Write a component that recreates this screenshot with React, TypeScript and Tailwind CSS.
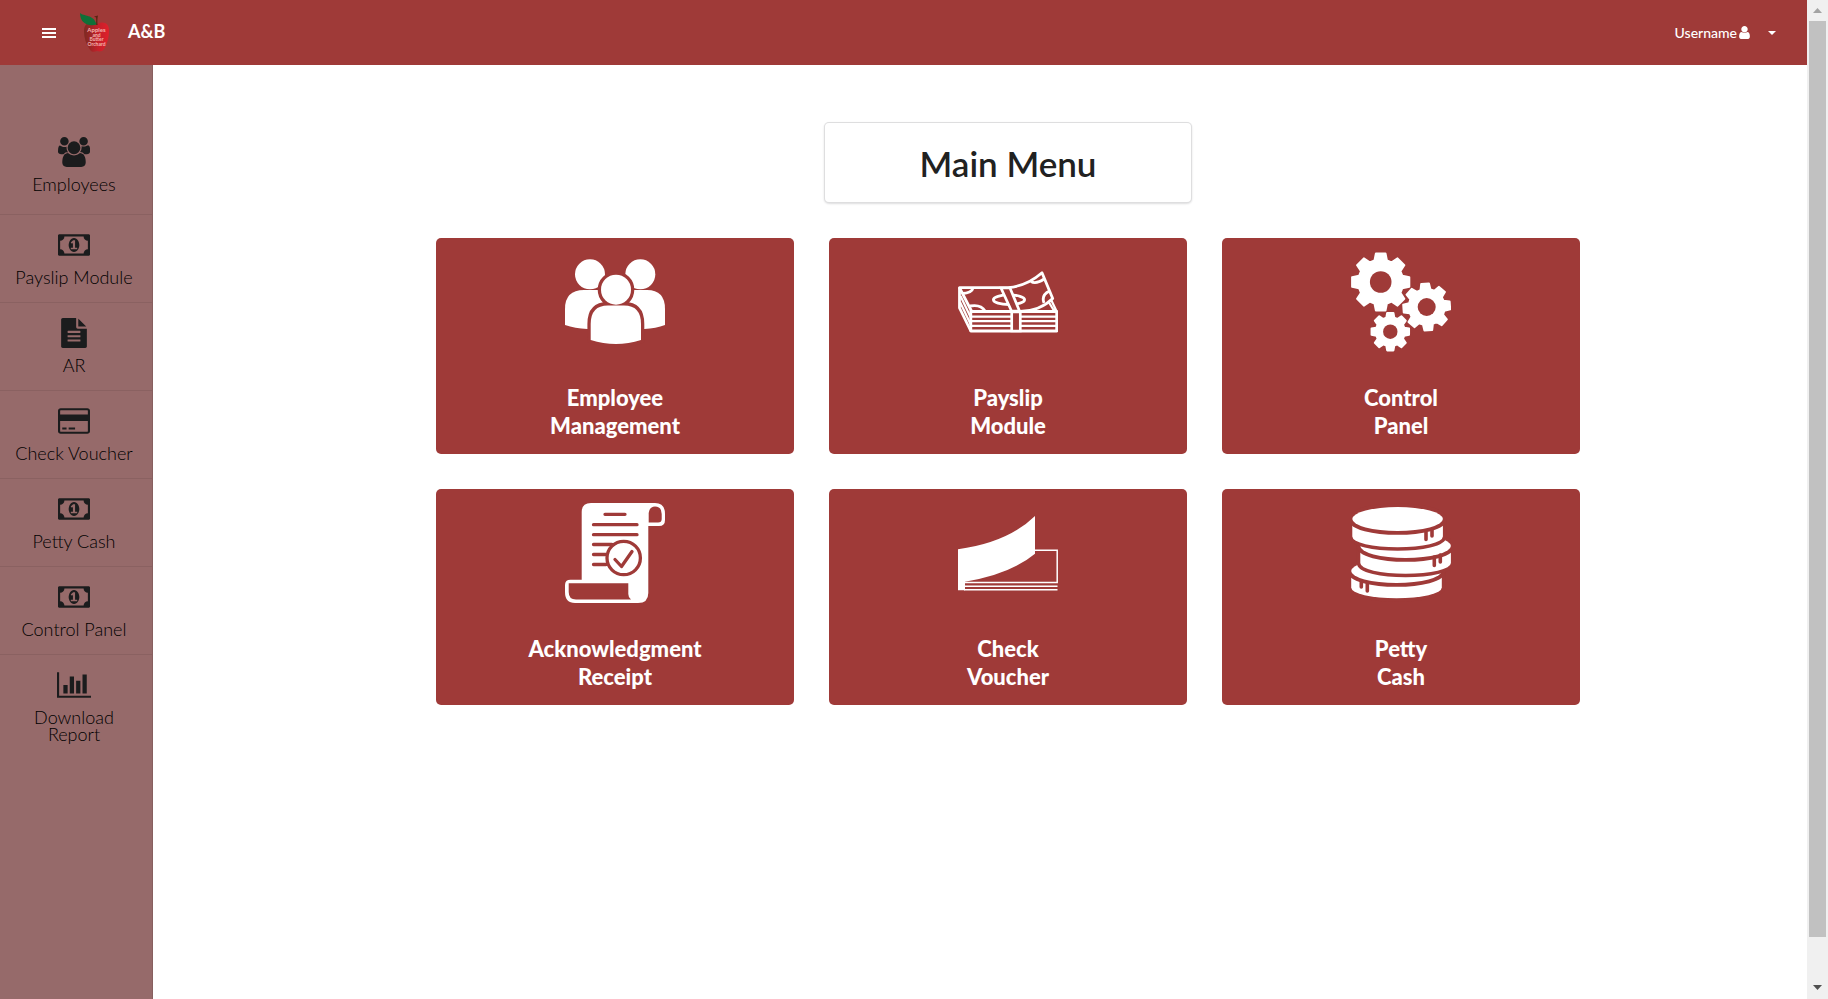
import type { ReactNode } from "react";

const BRAND = "#9f3a38";

type Glyph = { box: string; d: string; size: string };

const glyphs: Record<string, Glyph> = {
  users: {
    box: "0 0 1920 1792",
    size: "h-[30px] w-8",
    d: "M593 896q-162 5-265 128h-134q-82 0-138-40.5t-56-118.5q0-353 124-353 6 0 43.5 21t97.5 42.5 119 21.5q67 0 133-23-5 37-5 66 0 159 93 283zm1071 637q0 120-73 189.5t-194 69.5h-874q-121 0-194-69.5t-73-189.5q0-53 3.5-103.5t14-109 26.5-108.5 43-97.5 62-81 85.5-53.5 111.5-20q10 0 43 21.5t73 48 107 48 135 21.5 135-21.5 107-48 73-48 43-21.5q61 0 111.5 20t85.5 53.5 62 81 43 97.5 26.5 108.5 14 109 3.5 103.5zm-1024-1277q0 106-75 181t-181 75-181-75-75-181 75-181 181-75 181 75 75 181zm704 384q0 159-112.5 271.5t-271.5 112.5-271.5-112.5-112.5-271.5 112.5-271.5 271.5-112.5 271.5 112.5 112.5 271.5zm576 225q0 78-56 118.5t-138 40.5h-134q-103-123-265-128 93-124 93-283 0-29-5-66 66 23 133 23 59 0 119-21.5t97.5-42.5 43.5-21q124 0 124 353zm-128-609q0 106-75 181t-181 75-181-75-75-181 75-181 181-75 181 75 75 181z",
  },
  money: {
    box: "0 -256 1920 1792",
    size: "h-[30px] w-8",
    d: "M768 896h384v-96h-128v-448h-114l-148 137 77 80q42-37 55-57h2v288h-128v96zm512-256q0 70-21 142t-59.5 134-101.5 101-138 39-138-39-101.5-101-59.5-134-21-142 21-142 59.5-134 101.5-101 138-39 138 39 101.5 101 59.5 134 21 142zm512 256v-512q-106 0-181-75t-75-181h-1152q0 106-75 181t-181 75v512q106 0 181 75t75 181h1152q0-106 75-181t181-75zm128-832v1152q0 26-19 45t-45 19h-1792q-26 0-45-19t-19-45v-1152q0-26 19-45t45-19h1792q26 0 45 19t19 45z",
  },
  file: {
    box: "0 0 1792 1792",
    size: "size-[30px]",
    d: "M1596 476q14 14 28 36h-472v-472q22 14 36 28zm-476 164h544v1056q0 40-28 68t-68 28h-1344q-40 0-68-28t-28-68v-1600q0-40 28-68t68-28h800v544q0 40 28 68t68 28zm160 736v-64q0-14-9-23t-23-9h-704q-14 0-23 9t-9 23v64q0 14 9 23t23 9h704q14 0 23-9t9-23zm0-256v-64q0-14-9-23t-23-9h-704q-14 0-23 9t-9 23v64q0 14 9 23t23 9h704q14 0 23-9t9-23zm0-256v-64q0-14-9-23t-23-9h-704q-14 0-23 9t-9 23v64q0 14 9 23t23 9h704q14 0 23-9t9-23z",
  },
  card: {
    box: "0 0 1920 1792",
    size: "h-[30px] w-8",
    d: "M1760 128q66 0 113 47t47 113v1216q0 66-47 113t-113 47h-1600q-66 0-113-47t-47-113v-1216q0-66 47-113t113-47h1600zm-1600 128q-13 0-22.5 9.5t-9.5 22.5v224h1664v-224q0-13-9.5-22.5t-22.5-9.5h-1600zm1600 1280q13 0 22.5-9.5t9.5-22.5v-608h-1664v608q0 13 9.5 22.5t22.5 9.5h1600zm-1504-128v-128h256v128h-256zm384 0v-128h384v128h-384z",
  },
  chart: {
    box: "0 0 2048 1792",
    size: "h-[30px] w-[34px]",
    d: "M640 896v512h-256v-512h256zm384-512v1024h-256v-1024h256zm1024 1152v128h-2048v-1536h128v1408h1920zm-640-896v768h-256v-768h256zm384-384v1152h-256v-1152h256z",
  },
  user: {
    box: "0 0 1792 1792",
    size: "size-[15px]",
    d: "M1536 1399q0 109-62.5 187t-150.5 78h-854q-88 0-150.5-78t-62.5-187q0-85 8.5-160.5t31.5-152 58.5-131 94-89 134.5-34.5q131 128 313 128t313-128q76 0 134.5 34.5t94 89 58.5 131 31.5 152 8.5 160.5zm-256-887q0 159-112.5 271.5t-271.5 112.5-271.5-112.5-112.5-271.5 112.5-271.5 271.5-112.5 271.5 112.5 112.5 271.5z",
  },
};

function Icon({ name }: { name: string }) {
  const g = glyphs[name];
  return (
    <svg viewBox={g.box} className={g.size} fill="currentColor" aria-hidden="true">
      <path d={g.d} />
    </svg>
  );
}

function Art({ children }: { children: ReactNode }) {
  return (
    <svg viewBox="0 0 100 100" className="size-[100px]" fill="#fff" aria-hidden="true">
      {children}
    </svg>
  );
}

function PeopleArt() {
  const body = "M25.7 88V72Q25.7 53.4 43 53.4H59Q76 53.4 76 72V88Q51 96 25.7 88Z";
  return (
    <Art>
      <circle cx="25" cy="22.3" r="15" />
      <circle cx="75.3" cy="22.3" r="15" />
      <path d="M0 73V57Q0 38 19 38H42V77H22.3Q10 76.600 0 73Z" />
      <path d="M100 73V57Q100 38 82 38H58V77H79.300Q91 76.600 100 73Z" />
      <g fill={BRAND} stroke={BRAND} strokeWidth="6.600">
        <circle cx="51" cy="37.700" r="15" />
        <path d={body} />
      </g>
      <circle cx="51" cy="37.700" r="15" />
      <path d={body} />
    </Art>
  );
}

function CashArt() {
  return (
    <Art>
      <g fill="none" stroke="#fff" strokeWidth="2.800" strokeLinejoin="round">
        <path d="M1.500 35.700H50Q69 34 84 20.800L94.700 46.500Q82 59 62 59.500H13.700Z" />
        <path d="M1.500 35.700V56L12.800 79" />
        <path d="M2.500 44L13 66M2 50L13 73" strokeWidth="2.200" />
        <path d="M93 47.500L98.700 59.500M91 50.500L96.500 59.500" strokeWidth="2.200" />
        <path d="M12.800 59.500H98.700V79H12.800Z" />
        <path d="M12.800 64.600H53M12.800 69.200H53M12.800 73.800H53M62 64.600H98M62 69.200H98M62 73.800H98" strokeWidth="2.300" />
        <ellipse cx="51" cy="47.700" rx="15.600" ry="4.800" />
        <path d="M4 41.500Q14 41 15 36M12 54Q23 52 27 59M73 29.500Q78 32.500 86 27M91.500 39Q83 43 86 51" />
      </g>
      <path d="M43 36H52L61.500 59H53.500Z" fill={BRAND} stroke="#fff" strokeWidth="2.700" />
      <path d="M53.700 60H62.300V79H53.700Z" fill={BRAND} stroke="#fff" strokeWidth="2.700" />
    </Art>
  );
}

function gearPath(cx: number, cy: number, outer: number, root: number, turn: number) {
  const points: string[] = [];
  const add = (r: number, deg: number) => {
    const a = ((deg + turn) * Math.PI) / 180;
    points.push(`${(cx + r * Math.cos(a)).toFixed(2)} ${(cy + r * Math.sin(a)).toFixed(2)}`);
  };
  for (let tooth = 0; tooth < 8; tooth++) {
    const mid = tooth * 45;
    add(root, mid - 16);
    add(outer, mid - 9.5);
    add(outer, mid + 9.5);
    add(root, mid + 16);
  }
  return `M${points.join("L")}Z`;
}

function GearsArt() {
  const gears = [
    { cx: 29.7, cy: 30, outer: 29, root: 22.5, hole: 10.8, turn: 0 },
    { cx: 75.7, cy: 55, outer: 23.6, root: 18, hole: 9, turn: -4 },
    { cx: 39.3, cy: 79.7, outer: 19, root: 14.5, hole: 7.2, turn: 0 },
  ];
  return (
    <Art>
      {gears.map((g) => (
        <g key={g.cx}>
          <path
            d={gearPath(g.cx, g.cy, g.outer, g.root, g.turn)}
            stroke="#fff"
            strokeWidth="2"
            strokeLinejoin="round"
          />
          <circle cx={g.cx} cy={g.cy} r={g.hole} fill={BRAND} />
        </g>
      ))}
    </Art>
  );
}

function ReceiptArt() {
  return (
    <Art>
      <path d="M16.700 78V9Q16.700 0 26 0H90Q100 0 100 11V17Q100 23 94 23H83.300V90Q83.300 100 73 100H10Q0 100 0 89V82Q0 76.700 5.500 76.700H16.700Z" />
      <path d="M83.700 19.500V10Q84.500 3.500 90 3.500Q96.700 3.500 96.700 11V16Q96.700 19.500 93 19.500Z" fill={BRAND} />
      <path d="M3.700 80.300H63.300V91Q63.300 94.500 66 96.600H11Q3.700 96.600 3.700 89Z" fill={BRAND} />
      <g fill="none" stroke={BRAND} strokeWidth="3.300" strokeLinecap="round" strokeLinejoin="round">
        <path d="M40 11.300H60M28.500 21.700H72M28.500 31.700H72M28.500 41.500H47M28.500 51.500H41M28.500 61.500H41" />
        <circle cx="58.700" cy="55" r="16.700" fill="#fff" />
        <path d="M50 56.500L56.500 63.500L67 48.500" />
      </g>
    </Art>
  );
}

function ChequeArt() {
  return (
    <Art>
      <path d="M0 46.300Q50 39.500 77 13V50.700Q52 71.500 7 78.700V87.300H0Z" />
      <path
        d="M77 47.200H99.200V79.600H6M6 83.300H99.500M6 86.700H99.500"
        fill="none"
        stroke="#fff"
        strokeWidth="1.500"
      />
    </Art>
  );
}

function Coin({ left, top, edge, ticks }: { left: number; top: number; edge: number; ticks: string }) {
  const right = left + 90.6;
  const side = `M${left} ${top}V${edge}A45.300 10.800 0 0 0 ${right} ${edge}V${top}A45.300 12 0 0 0 ${left} ${top}Z`;
  return (
    <g>
      <path d={side} fill={BRAND} stroke={BRAND} strokeWidth="7" />
      <path d={side} />
      <ellipse cx={left + 45.3} cy={top} rx="45.300" ry="12" fill={BRAND} stroke={BRAND} strokeWidth="7.600" />
      <ellipse cx={left + 45.3} cy={top} rx="45.300" ry="12" />
      <path d={ticks} stroke={BRAND} strokeWidth="3.600" strokeLinecap="round" fill="none" />
    </g>
  );
}

function CoinsArt() {
  return (
    <Art>
      <Coin left={0.2} top={68} edge={84.5} ticks="M10.300 79V84M16.300 80V88" />
      <Coin left={9.3} top={43} edge={60} ticks="M83.300 54V62.500M89.300 52V59" />
      <Coin left={1.3} top={16} edge={33.5} ticks="M75 29V36.500M81 27V33" />
    </Art>
  );
}

function AppleLogo() {
  return (
    <svg viewBox="0 0 30 40" className="h-10 w-[30px]" aria-hidden="true">
      <defs>
        <linearGradient id="apple-skin" x1="0" x2="1">
          <stop offset="0" stopColor="#7c2a22" />
          <stop offset="0.550" stopColor="#c3202a" />
          <stop offset="1" stopColor="#e0202b" />
        </linearGradient>
      </defs>
      <path d="M4 18C4 9 11 8 17 11C23 7.500 29 10 29 17C29 25 27 31 24 36C22 39 19 38.500 17 38C14 39.500 11 39 9.500 36C6 31 4 25 4 18Z" fill="url(#apple-skin)" />
      <path d="M14 3.500L18 2.500C17.200 6 17.300 9 17.600 12H16C16.300 9 16.300 6 16 4.500Z" fill="#5a2412" />
      <path d="M0 0C3 3.500 14 1 16.500 11.500C9 13.500 0 11 0 0Z" fill="#0f7038" />
      <g fill="#f5b5b0" fontFamily="Lato, sans-serif" fontWeight="700" fontSize="5" textAnchor="middle">
        <text x="16.500" y="18.500" fontSize="6">Apples</text>
        <text x="16.500" y="23.500">and</text>
        <text x="16.500" y="27.500">Butter</text>
        <text x="16.500" y="32.500">Orchard</text>
      </g>
    </svg>
  );
}

const sideItems = [
  { label: "Employees", icon: "users" },
  { label: "Payslip Module", icon: "money" },
  { label: "AR", icon: "file" },
  { label: "Check Voucher", icon: "card" },
  { label: "Petty Cash", icon: "money" },
  { label: "Control Panel", icon: "money" },
  { label: "Download Report", icon: "chart" },
];

const tiles = [
  { lines: ["Employee", "Management"], art: <PeopleArt /> },
  { lines: ["Payslip", "Module"], art: <CashArt /> },
  { lines: ["Control", "Panel"], art: <GearsArt /> },
  { lines: ["Acknowledgment", "Receipt"], art: <ReceiptArt /> },
  { lines: ["Check", "Voucher"], art: <ChequeArt /> },
  { lines: ["Petty", "Cash"], art: <CoinsArt /> },
];

function ScrollTrack() {
  return (
    <div className="flex w-[21px] shrink-0 flex-col items-center bg-[#f0f0f0]" aria-hidden="true">
      <div className="flex h-[21px] items-center">
        <svg viewBox="0 0 9 5" className="h-[5px] w-[9px]" fill="#a3a3a3">
          <path d="M4.500 0L9 5H0Z" />
        </svg>
      </div>
      <div className="w-[17px] grow bg-[#c1c1c1]" />
      <div className="flex h-[62px] items-end pb-[9px]">
        <svg viewBox="0 0 9 5" className="h-[5px] w-[9px]" fill="#505050">
          <path d="M0 0H9L4.500 5Z" />
        </svg>
      </div>
    </div>
  );
}

export default function App() {
  return (
    <div className="flex min-h-screen bg-white font-['Lato',sans-serif]">
      <div className="flex min-w-0 grow flex-col">
        <header className="flex h-[65px] shrink-0 items-center bg-[#9f3a38] pr-[31px] pl-[42px] text-white">
          <button type="button" aria-label="Toggle menu" className="flex">
            <svg viewBox="0 0 14 10" className="h-2.5 w-3.5" fill="#fff">
              <path d="M0 0H14V2H0ZM0 4H14V6H0ZM0 8H14V10H0Z" />
            </svg>
          </button>
          <a href="#home" className="ml-6 flex items-center gap-[18px]">
            <AppleLogo />
            <span className="pb-1 text-lg leading-6 font-bold">A&amp;B</span>
          </a>
          <button type="button" className="ml-auto flex items-center text-sm leading-5 font-medium">
            Username
            <Icon name="user" />
            <svg viewBox="0 0 8 4" className="ml-4 h-1 w-2" fill="#fff" aria-hidden="true">
              <path d="M0 0H8L4 4Z" />
            </svg>
          </button>
        </header>
        <div className="flex grow">
          <nav className="w-[153px] shrink-0 border-r border-[#875f5f] bg-[#966a6a] pt-[57px] text-[#1b1c1d]">
            <ul>
              {sideItems.map((item) => (
                <li key={item.label} className="border-b border-[#8a6161] first:pb-[5px] last:border-b-0">
                  <a href="#section" className="flex flex-col items-center pt-[15px] pr-4 pb-4 pl-3">
                    <Icon name={item.icon} />
                    <span className="mt-[9px] text-center text-lg leading-[17px] font-light text-black">
                      {item.label}
                    </span>
                  </a>
                </li>
              ))}
            </ul>
          </nav>
          <main className="flex grow flex-col items-center gap-[35px] pt-[57px] pl-14">
            <h1 className="w-[368px] rounded-[5px] border border-[#22242626] bg-white pt-5 pb-[19px] text-center text-[35px] leading-10 font-semibold text-[#212121] shadow-[0_1px_2px_0_#22242626]">
              Main Menu
            </h1>
            <div className="grid w-full max-w-[1144px] grid-cols-3 gap-[35px]">
              {tiles.map((tile) => (
                <a
                  key={tile.lines[0]}
                  href="#module"
                  className="flex flex-col items-center rounded-[5px] bg-[#9f3a38] py-3.5 text-white"
                >
                  {tile.art}
                  <span className="mt-8 text-center text-[22px] leading-7 font-black">
                    {tile.lines[0]}
                    <br />
                    {tile.lines[1]}
                  </span>
                </a>
              ))}
            </div>
          </main>
        </div>
      </div>
      <ScrollTrack />
    </div>
  );
}
